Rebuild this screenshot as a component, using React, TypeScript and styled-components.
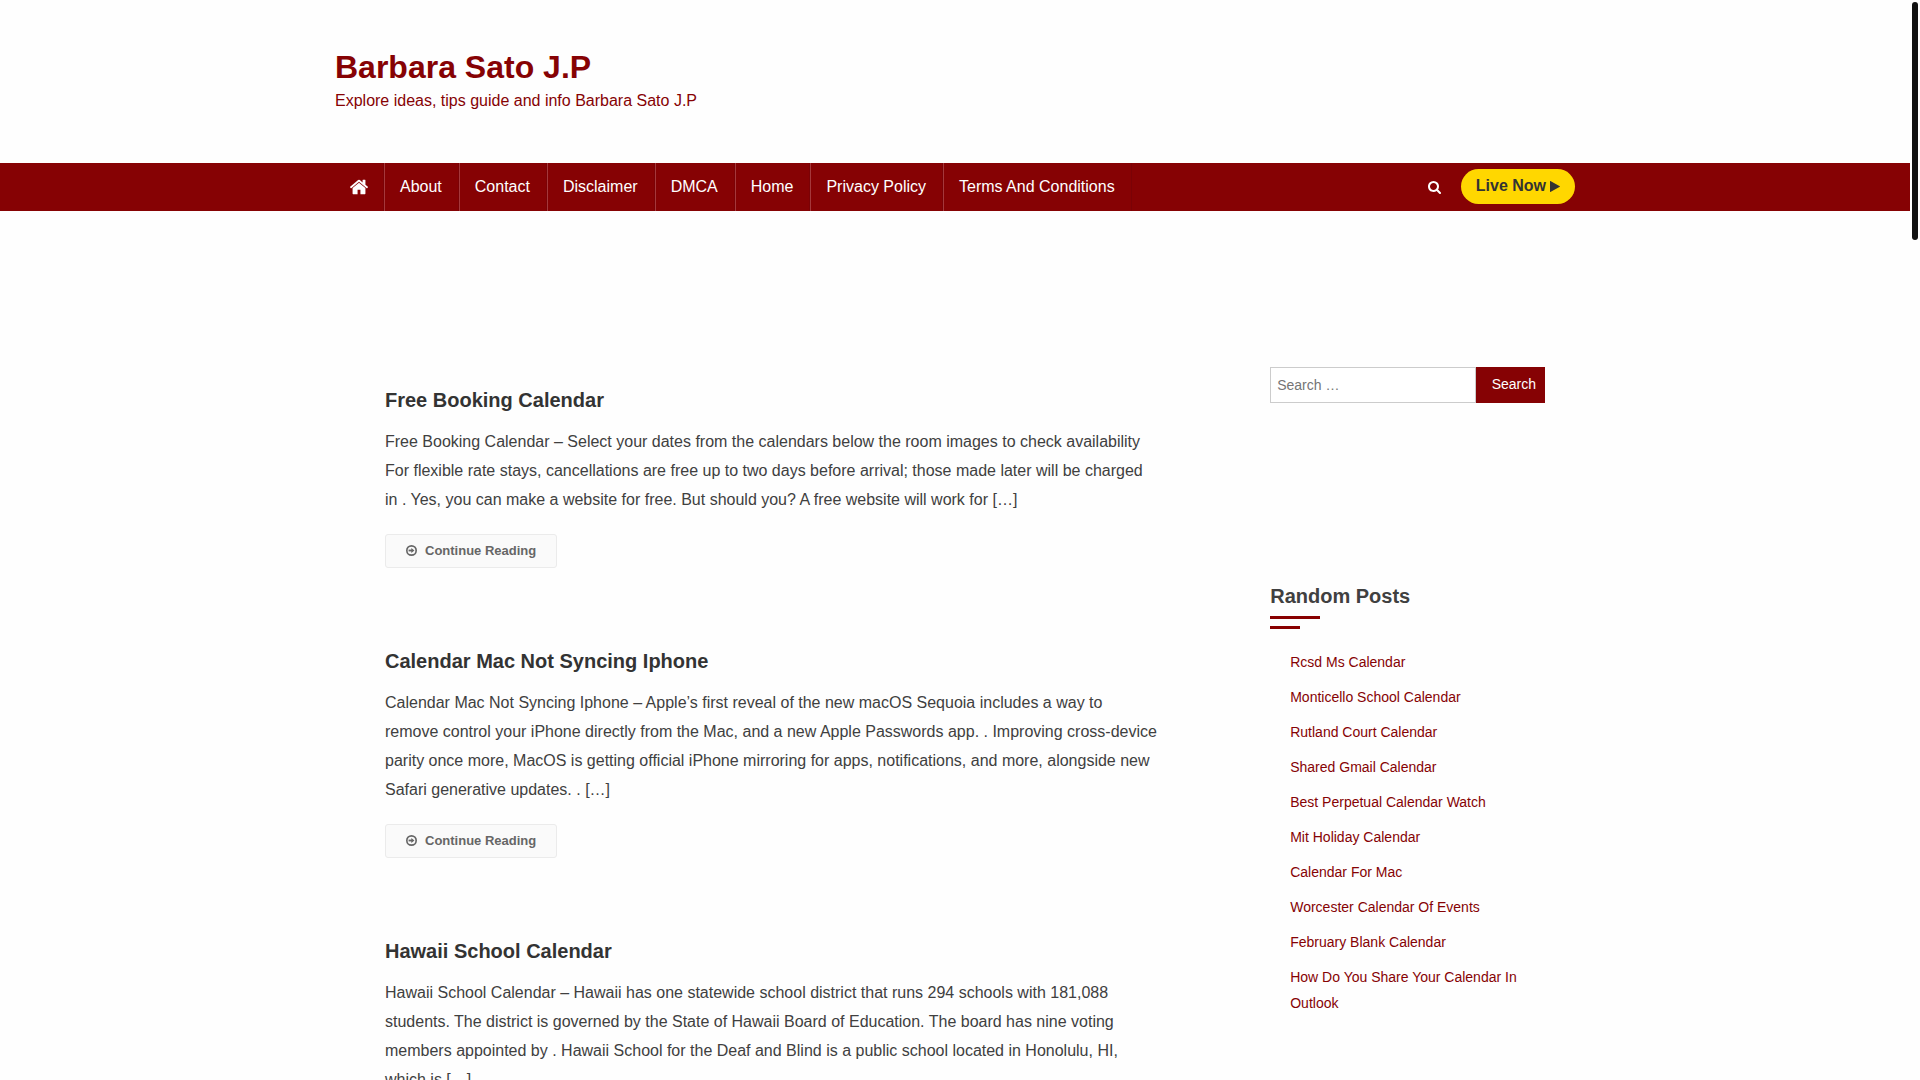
import React from "react";
import styled, { createGlobalStyle } from "styled-components";

const brand = "#860204";

const GlobalStyle = createGlobalStyle`
  *, *::before, *::after { box-sizing: border-box; }
  body {
    margin: 0;
    background: #fefefe;
    color: #404040;
    font: 16px/29px "Liberation Sans", Arial, sans-serif;
  }
  h1, h2, p, ul { margin: 0; padding: 0; }
  ul { list-style: none; }
  a { text-decoration: none; }
`;

const Page = styled.div`
  height: 100vh;
  overflow: hidden;
  padding-right: 10px;
`;

const ScrollThumb = styled.div`
  position: fixed;
  top: 2px;
  right: 2px;
  width: 6px;
  height: 22vh;
  border-radius: 3px;
  background: #111;
`;

const Container = styled.div`
  width: 100%;
  max-width: 1240px;
  margin: 0 auto;
`;

const Header = styled.header`
  padding: 50px 0 46px;
`;

const SiteTitle = styled.h1`
  font-size: 32px;
  line-height: 34px;

  a {
    color: ${brand};
  }
`;

const Tagline = styled.p`
  color: ${brand};
  line-height: 33px;
`;

const NavBar = styled.nav`
  background: ${brand};
`;

const NavInner = styled(Container)`
  display: flex;
  align-items: center;
  justify-content: space-between;
`;

const Menu = styled.ul`
  display: flex;
`;

const MenuItem = styled.li`
  border-right: 1px solid #7a0206;

  & + & {
    border-left: 1px solid #a5383b;
  }
`;

const MenuLink = styled.a<{ $icon?: boolean }>`
  display: flex;
  align-items: center;
  height: 48px;
  padding: ${(p) => (p.$icon ? "0 15px" : "0 16px 2px 15px")};
  color: #fff;
`;

const NavTools = styled.div`
  display: flex;
  align-items: center;
  gap: 20px;
`;

const IconButton = styled.button`
  display: flex;
  padding: 0;
  border: 0;
  background: none;
  color: #fff;
  cursor: pointer;
`;

const LiveLink = styled.a`
  display: flex;
  align-items: center;
  gap: 4px;
  height: 35px;
  margin-bottom: 2px;
  padding: 0 15px 2px;
  border-radius: 25px;
  background: gold;
  color: #333;
  font-weight: bold;

  svg {
    margin-top: 2px;
  }
`;

const Content = styled(Container)`
  display: flex;
  justify-content: space-between;
  padding-top: 156px;
`;

const Main = styled.main`
  width: 70%;
  padding: 20px 45px 0 50px;
`;

const Article = styled.article`
  margin-bottom: 80px;
`;

const PostTitle = styled.h2`
  margin-bottom: 14px;
  font-size: 20px;
  line-height: 26px;

  a {
    color: #333;
  }
`;

const ReadMore = styled.a`
  display: inline-flex;
  align-items: center;
  gap: 8px;
  height: 34px;
  margin-top: 20px;
  padding: 0 20px 2px;
  border: 1px solid #ebebeb;
  border-radius: 3px;
  background: #fafafa;
  color: #666;
  font-size: 13px;
  font-weight: bold;
  vertical-align: top;
`;

const Sidebar = styled.aside`
  width: 27%;
  padding: 0 30px;
`;

const SearchForm = styled.form`
  display: flex;
  height: 36px;
  margin-bottom: 180px;
`;

const SearchInput = styled.input`
  flex: 1;
  min-width: 0;
  padding: 0 6px;
  border: 1px solid #ccc;
  border-radius: 0;
  background: #fff;
  font: 14px "Liberation Sans", Arial, sans-serif;

  &::placeholder {
    color: #757575;
  }
`;

const SearchSubmit = styled.button`
  padding: 0 9px 2px 16px;
  border: 0;
  background: ${brand};
  color: #fff;
  font: 14px "Liberation Sans", Arial, sans-serif;
  cursor: pointer;
`;

const Heading = styled.h2`
  font-size: 20px;
  line-height: 26px;
`;

const TitleRule = styled.span<{ $width: number }>`
  display: block;
  width: ${(p) => p.$width}px;
  height: 3px;
  margin-top: 7px;
  background: #880000;
`;

const PostList = styled.ul`
  display: flex;
  flex-direction: column;
  gap: 9px;
  margin-top: 20px;
  padding-left: 20px;
  font-size: 14px;
  line-height: 26px;

  a {
    color: ${brand};
  }
`;

const HomeIcon = () => (
  <svg width="18" height="18" viewBox="89 89 1614 1614" fill="currentColor" aria-hidden="true">
    <path d="M1472 992v480q0 26-19 45t-45 19h-384v-384h-256v384h-384q-26 0-45-19t-19-45v-480q0-1 .5-3t.5-3l575-474 575 474q1 2 1 6zm223-69l-62 74q-8 9-21 11h-3q-13 0-21-7l-692-577-692 577q-12 8-24 7-13-2-21-11l-62-74q-8-10-7-23.5t11-21.5l719-599q32-26 76-26t76 26l244 204v-195q0-14 9-23t23-9h192q14 0 23 9t9 23v408l219 182q10 8 11 21.5t-7 23.5z" />
  </svg>
);

const SearchIcon = () => (
  <svg width="13" height="13" viewBox="64 128 1664 1664" fill="currentColor" aria-hidden="true">
    <path d="M1216 832q0-185-131.5-316.5t-316.5-131.5-316.5 131.5-131.5 316.5 131.5 316.5 316.5 131.5 316.5-131.5 131.5-316.5zm512 832q0 52-38 90t-90 38q-54 0-90-38l-343-342q-179 124-399 124-143 0-273.5-55.5t-225-150-150-225-55.5-273.5 55.5-273.5 150-225 225-150 273.5-55.5 273.5 55.5 225 150 150 225 55.5 273.5q0 220-124 399l343 343q37 37 37 90z" />
  </svg>
);

const PlayIcon = () => (
  <svg width="10" height="11" viewBox="192 120 1408 1552" fill="currentColor" aria-hidden="true">
    <path d="M1576 927l-1328 738q-23 13-39.5 3t-16.5-36v-1472q0-26 16.5-36t39.5 3l1328 738q23 13 23 31t-23 31z" />
  </svg>
);

const CircleArrow = () => (
  <svg width="11" height="11" viewBox="0 0 12 12" fill="none" stroke="currentColor" aria-hidden="true">
    <circle cx="6" cy="6" r="5.1" strokeWidth="1.8" />
    <path d="M2.8 6H7" strokeWidth="2" />
    <path d="M5.8 3.2 9.2 6 5.8 8.8z" fill="currentColor" stroke="none" />
  </svg>
);

const menu = ["About", "Contact", "Disclaimer", "DMCA", "Home", "Privacy Policy", "Terms And Conditions"];

const articles = [
  {
    title: "Free Booking Calendar",
    text: "Free Booking Calendar – Select your dates from the calendars below the room images to check availability For flexible rate stays, cancellations are free up to two days before arrival; those made later will be charged in . Yes, you can make a website for free. But should you? A free website will work for […]",
  },
  {
    title: "Calendar Mac Not Syncing Iphone",
    text: "Calendar Mac Not Syncing Iphone – Apple’s first reveal of the new macOS Sequoia includes a way to remove control your iPhone directly from the Mac, and a new Apple Passwords app. . Improving cross-device parity once more, MacOS is getting official iPhone mirroring for apps, notifications, and more, alongside new Safari generative updates. . […]",
  },
  {
    title: "Hawaii School Calendar",
    text: "Hawaii School Calendar – Hawaii has one statewide school district that runs 294 schools with 181,088 students. The district is governed by the State of Hawaii Board of Education. The board has nine voting members appointed by . Hawaii School for the Deaf and Blind is a public school located in Honolulu, HI, which is […]",
  },
];

const randomPosts = [
  "Rcsd Ms Calendar",
  "Monticello School Calendar",
  "Rutland Court Calendar",
  "Shared Gmail Calendar",
  "Best Perpetual Calendar Watch",
  "Mit Holiday Calendar",
  "Calendar For Mac",
  "Worcester Calendar Of Events",
  "February Blank Calendar",
  "How Do You Share Your Calendar In Outlook",
];

export default function App() {
  return (
    <Page>
      <GlobalStyle />
      <Container>
        <Header>
          <SiteTitle>
            <a href="#home">Barbara Sato J.P</a>
          </SiteTitle>
          <Tagline>Explore ideas, tips guide and info Barbara Sato J.P</Tagline>
        </Header>
      </Container>
      <NavBar>
        <NavInner>
          <Menu>
            <MenuItem>
              <MenuLink $icon href="#home" aria-label="Front page">
                <HomeIcon />
              </MenuLink>
            </MenuItem>
            {menu.map((label) => (
              <MenuItem key={label}>
                <MenuLink href="#page">{label}</MenuLink>
              </MenuItem>
            ))}
          </Menu>
          <NavTools>
            <IconButton type="button" aria-label="Open search">
              <SearchIcon />
            </IconButton>
            <LiveLink href="#live">
              Live Now
              <PlayIcon />
            </LiveLink>
          </NavTools>
        </NavInner>
      </NavBar>
      <Content>
        <Main>
          {articles.map((a) => (
            <Article key={a.title}>
              <PostTitle>
                <a href="#post">{a.title}</a>
              </PostTitle>
              <p>{a.text}</p>
              <ReadMore href="#post">
                <CircleArrow />
                Continue Reading
              </ReadMore>
            </Article>
          ))}
        </Main>
        <Sidebar>
          <SearchForm role="search" onSubmit={(e) => e.preventDefault()}>
            <SearchInput type="search" aria-label="Search for" placeholder="Search …" />
            <SearchSubmit type="submit">Search</SearchSubmit>
          </SearchForm>
          <Heading>Random Posts</Heading>
          <TitleRule $width={50} />
          <TitleRule $width={30} />
          <PostList>
            {randomPosts.map((post) => (
              <li key={post}>
                <a href="#post">{post}</a>
              </li>
            ))}
          </PostList>
        </Sidebar>
      </Content>
      <ScrollThumb />
    </Page>
  );
}
